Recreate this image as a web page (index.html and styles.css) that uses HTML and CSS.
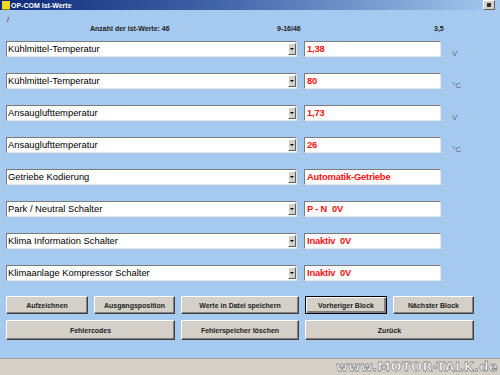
FILE: index.html
```html
<!DOCTYPE html>
<html lang="de">
<head>
    <meta charset="UTF-8">
    <title>OP-COM Ist-Werte</title>
    <link rel="stylesheet" href="styles.css">
</head>
<body>
    <div class="window">
        <div class="titlebar">
            <span class="app-icon"></span>
            <span class="title">OP-COM Ist-Werte</span>
            <span class="close-btn"><span></span></span>
        </div>

        <div class="slash">/</div>
        <div class="info">
            <span class="count">Anzahl der Ist-Werte: 46</span>
            <span class="range">9-16/46</span>
            <span class="version">3,5</span>
        </div>

        <ul class="values">
            <li class="row">
                <div class="select">Kühlmittel-Temperatur<span class="arrow"></span></div>
                <div class="value">1,38</div>
                <span class="unit">V</span>
            </li>
            <li class="row">
                <div class="select">Kühlmittel-Temperatur<span class="arrow"></span></div>
                <div class="value">80</div>
                <span class="unit">°C</span>
            </li>
            <li class="row">
                <div class="select">Ansauglufttemperatur<span class="arrow"></span></div>
                <div class="value">1,73</div>
                <span class="unit">V</span>
            </li>
            <li class="row">
                <div class="select">Ansauglufttemperatur<span class="arrow"></span></div>
                <div class="value">26</div>
                <span class="unit">°C</span>
            </li>
            <li class="row">
                <div class="select">Getriebe Kodierung<span class="arrow"></span></div>
                <div class="value">Automatik-Getriebe</div>
            </li>
            <li class="row">
                <div class="select">Park / Neutral Schalter<span class="arrow"></span></div>
                <div class="value">P - N &nbsp;0V</div>
            </li>
            <li class="row">
                <div class="select">Klima Information Schalter<span class="arrow"></span></div>
                <div class="value">Inaktiv &nbsp;0V</div>
            </li>
            <li class="row">
                <div class="select">Klimaanlage Kompressor Schalter<span class="arrow"></span></div>
                <div class="value">Inaktiv &nbsp;0V</div>
            </li>
        </ul>

        <div class="buttons">
            <button class="btn">Aufzeichnen</button>
            <button class="btn">Ausgangsposition</button>
            <button class="btn">Werte in Datei speichern</button>
            <button class="btn default">Vorheriger Block</button>
            <button class="btn">Nächster Block</button>
            <button class="btn tall wide">Fehlercodes</button>
            <button class="btn tall">Fehlerspeicher löschen</button>
            <button class="btn tall wide">Zurück</button>
        </div>

        <div class="statusbar">
            <span class="watermark">www.MOTOR-TALK.de</span>
        </div>
    </div>
</body>
</html>
```

FILE: styles.css
```css
body {
    margin: 0;
    font-family: 'Liberation Sans', Arial, sans-serif;
}
.window {
    width: 500px;
    height: 375px;
    background: #a6c9ef;
    display: flex;
    flex-direction: column;
    overflow: hidden;
}
.titlebar {
    height: 10px;
    display: flex;
    align-items: center;
    background: linear-gradient(to right, #0c2a78, #4466aa 45%, #a6c9ef);
    color: #fff;
    font-size: 7px;
    font-weight: bold;
}
.app-icon {
    width: 8px;
    height: 8px;
    margin: 0 1px 0 2px;
    background: #f0d820;
    border-bottom: 1px solid #8a7a10;
}
.close-btn {
    margin-left: auto;
    margin-right: 5px;
    width: 10px;
    height: 8px;
    background: #d4d0c8;
    border: 1px solid;
    border-color: #fff #606060 #606060 #fff;
    display: flex;
    align-items: center;
    justify-content: center;
}
.close-btn span {
    width: 4px;
    height: 4px;
    background: #303030;
}
.slash {
    margin: 6px 0 0 7px;
    height: 8px;
    font-size: 7px;
    line-height: 8px;
    color: #222;
}
.info {
    position: relative;
    height: 10px;
    font-size: 7px;
    font-weight: bold;
    color: #222;
}
.info span {
    position: absolute;
    top: 1px;
}
.count { left: 90px; }
.range { left: 277px; }
.version { left: 434px; }
.values {
    list-style: none;
    margin: 7px 0 0 0;
    padding: 0;
    display: flex;
    flex-direction: column;
    gap: 16px;
}
.row {
    height: 16px;
    display: flex;
    align-items: flex-start;
}
.select {
    margin-left: 6px;
    width: 291px;
    height: 16px;
    box-sizing: border-box;
    background: #fff;
    border: 1px solid;
    border-color: #7c7c7c #e8e8e8 #e8e8e8 #7c7c7c;
    font-size: 9.4px;
    line-height: 14px;
    padding-left: 1px;
    color: #000;
    display: flex;
}
.arrow {
    margin-left: auto;
    margin-top: 1px;
    width: 8px;
    height: 12px;
    box-sizing: border-box;
    background: #d4d0c8;
    border: 1px solid;
    border-color: #fff #606060 #606060 #fff;
    position: relative;
}
.arrow::after {
    content: '';
    position: absolute;
    left: 1px;
    top: 4px;
    border-left: 2px solid transparent;
    border-right: 2px solid transparent;
    border-top: 2px solid #000;
}
.value {
    margin-left: 7px;
    width: 137px;
    height: 16px;
    box-sizing: border-box;
    background: #fff;
    border: 1px solid;
    border-color: #7c7c7c #e8e8e8 #e8e8e8 #7c7c7c;
    padding-left: 2px;
    font-size: 9.4px;
    font-weight: bold;
    letter-spacing: -0.2px;
    line-height: 14px;
    color: #ff1010;
}
.unit {
    margin: 8px 0 0 11px;
    font-size: 8px;
    color: #5a6a82;
}
.buttons {
    margin: 15px 0 0 6px;
    display: grid;
    grid-template-columns: 82px 81px 118px 82px 81px;
    grid-auto-rows: auto;
    column-gap: 6px;
    row-gap: 6px;
}
.btn {
    height: 18px;
    padding: 0;
    background: #d4d0c8;
    border: 1px solid;
    border-color: #fff #404040 #404040 #fff;
    box-shadow: inset -1px -1px #808080;
    font-family: 'Liberation Sans', Arial, sans-serif;
    font-size: 7px;
    font-weight: bold;
    color: #222;
}
.btn.tall {
    height: 20px;
}
.btn.wide {
    grid-column: span 2;
}
.btn.default {
    border: 1px solid #000;
    box-shadow: inset 1px 1px #fff, inset -2px -2px #808080;
}
.statusbar {
    margin-top: auto;
    height: 16px;
    background: #d4d0c8;
    border-top: 1px solid #a0a0a0;
    display: flex;
    align-items: center;
    justify-content: flex-end;
}
.watermark {
    margin-right: 2px;
    font-family: 'DejaVu Sans', sans-serif;
    font-size: 13px;
    font-weight: bold;
    letter-spacing: 0.3px;
    color: #fff;
    -webkit-text-stroke: 0.8px #8c8c8c;
    line-height: 14px;
}
```
